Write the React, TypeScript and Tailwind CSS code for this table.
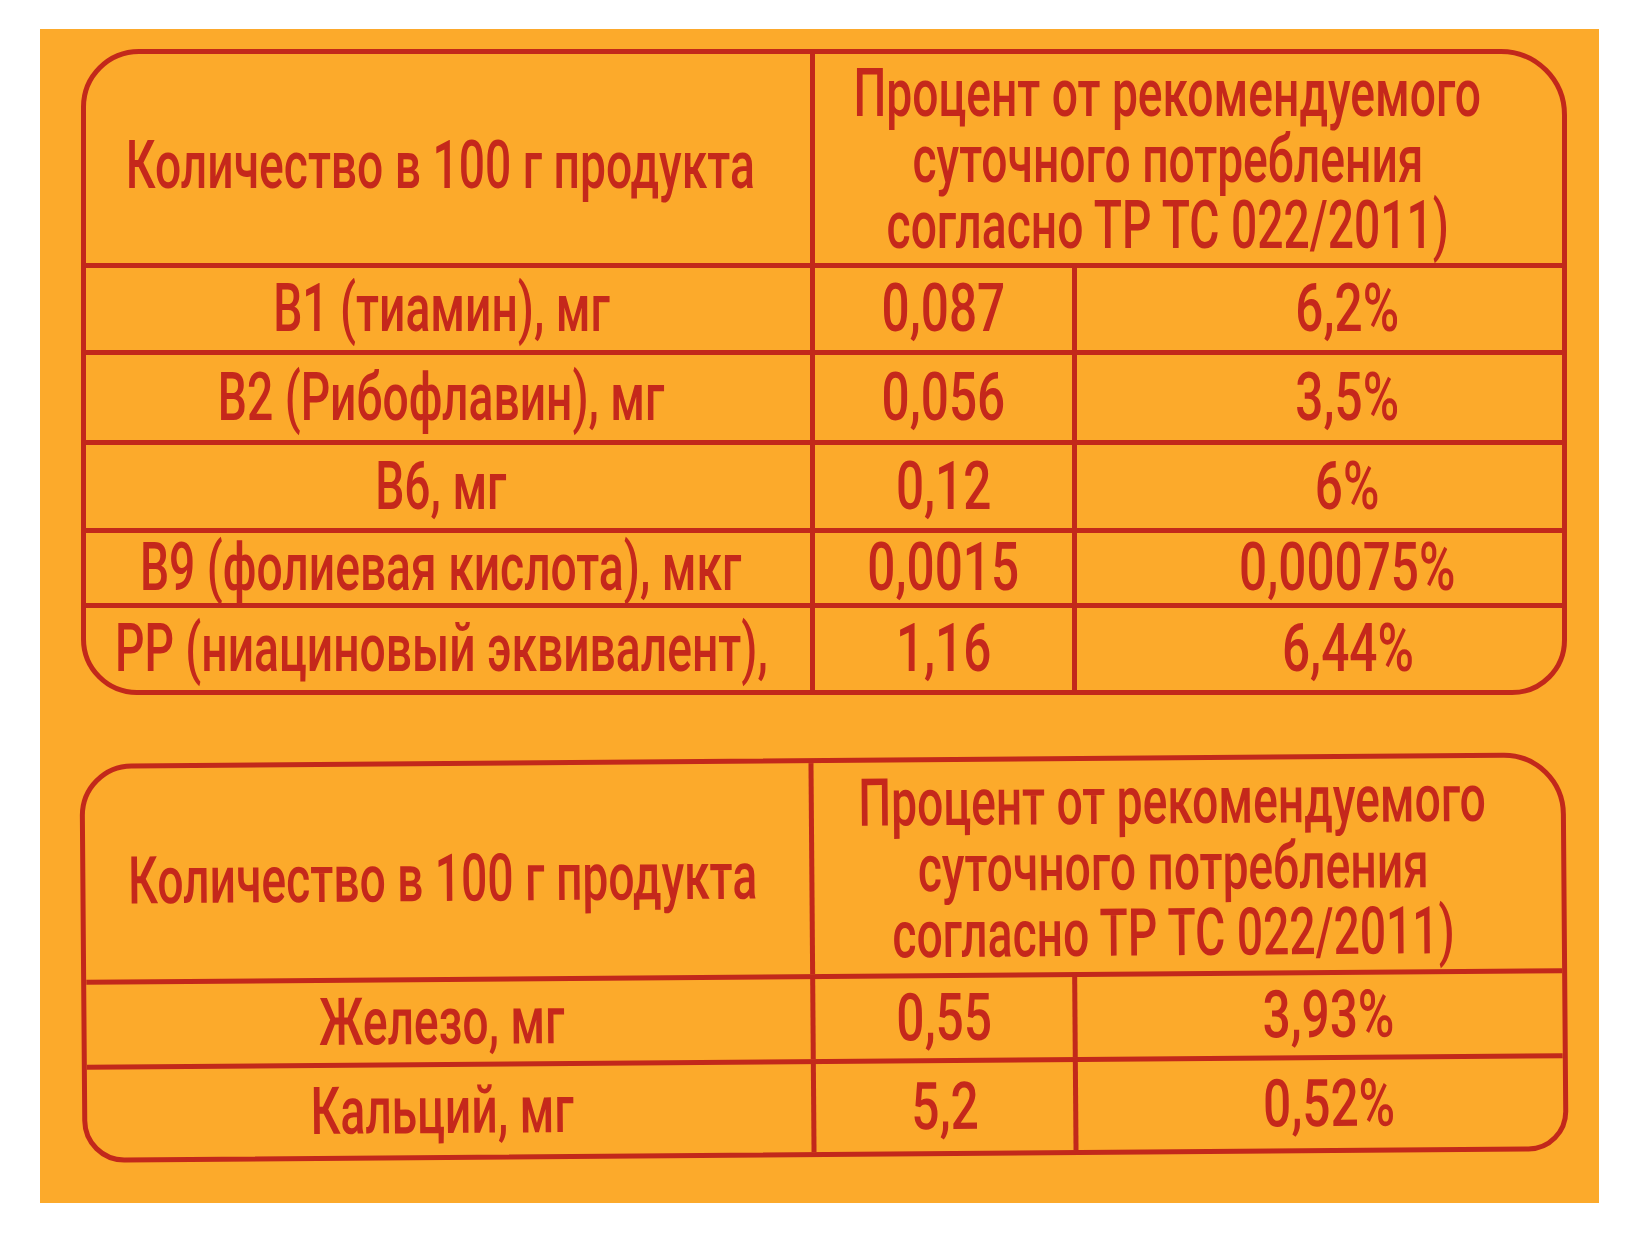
import React from "react";

type RowProps = {
  h: string;
  a: string;
  b: string;
  c: string;
  c3: string;
};

const T = ({ children }: { children: React.ReactNode }) => (
  <span className="inline-block whitespace-nowrap scale-x-[0.7]">{children}</span>
);

const N = ({ children }: { children: React.ReactNode }) => (
  <span className="inline-block whitespace-nowrap scale-x-[0.75]">{children}</span>
);

function Row({ h, a, b, c, c3 }: RowProps) {
  return (
    <div className={`flex border-t-[5px] border-[#c2281b] ${h}`}>
      <div className="w-[724px] shrink-0 min-w-0 flex items-center justify-center pr-[14px]">
        <T>{a}</T>
      </div>
      <div className="w-[262px] shrink-0 min-w-0 border-l-[5px] border-[#c2281b] flex items-center justify-center">
        <N>{b}</N>
      </div>
      <div className={`flex-1 min-w-0 border-l-[5px] border-[#c2281b] flex items-center justify-center ${c3}`}>
        <N>{c}</N>
      </div>
    </div>
  );
}

function Header({ h, pr, lpr }: { h: string; pr: string; lpr: string }) {
  return (
    <div className={`flex ${h}`}>
      <div className={`w-[724px] shrink-0 min-w-0 flex items-center justify-center pt-[14px] ${lpr}`}>
        <T>Количество в 100 г продукта</T>
      </div>
      <div className={`flex-1 min-w-0 border-l-[5px] border-[#c2281b] flex flex-col items-center justify-center pt-[2px] ${pr}`}>
        <T>Процент от рекомендуемого</T>
        <T>суточного потребления</T>
        <T>согласно ТР ТС 022/2011)</T>
      </div>
    </div>
  );
}

export default function App() {
  return (
    <div className="w-[1638px] h-[1235px] bg-white pt-[29px] pl-[40px] font-[Roboto,sans-serif] font-medium text-[66px] leading-[66px] text-[#c5281b]">
      <div className="w-[1559px] h-[1174px] bg-[#fcaa2b] pt-[20px] pl-[41px]">
        <div className="w-[1486px] border-[5px] border-[#c2281b] rounded-tl-[58px] rounded-tr-[66px] rounded-bl-[56px] rounded-br-[55px] overflow-hidden">
          <Header h="h-[209px]" pr="pr-[42px]" lpr="pr-[16px]" />
          <Row h="h-[87px]" a="B1 (тиамин), мг" b="0,087" c="6,2%" c3="pl-[56px]" />
          <Row h="h-[90px]" a="B2 (Рибофлавин), мг" b="0,056" c="3,5%" c3="pl-[56px]" />
          <Row h="h-[88px]" a="B6, мг" b="0,12" c="6%" c3="pl-[56px]" />
          <Row h="h-[75px]" a="B9 (фолиевая кислота), мкг" b="0,0015" c="0,00075%" c3="pl-[56px]" />
          <Row h="h-[87px]" a="PP (ниациновый эквивалент)," b="1,16" c="6,44%" c3="pl-[56px]" />
        </div>

        <div className="mt-[63px] w-[1486px] -rotate-[0.45deg] border-[5px] border-[#c2281b] rounded-tl-[52px] rounded-tr-[62px] rounded-bl-[42px] rounded-br-[40px] overflow-hidden">
          <Header h="h-[211px]" pr="pr-[30px]" lpr="pr-[10px]" />
          <Row h="h-[85px]" a="Железо, мг" b="0,55" c="3,93%" c3="pl-[16px]" />
          <Row h="h-[93px]" a="Кальций, мг" b="5,2" c="0,52%" c3="pl-[16px]" />
        </div>
      </div>
    </div>
  );
}
